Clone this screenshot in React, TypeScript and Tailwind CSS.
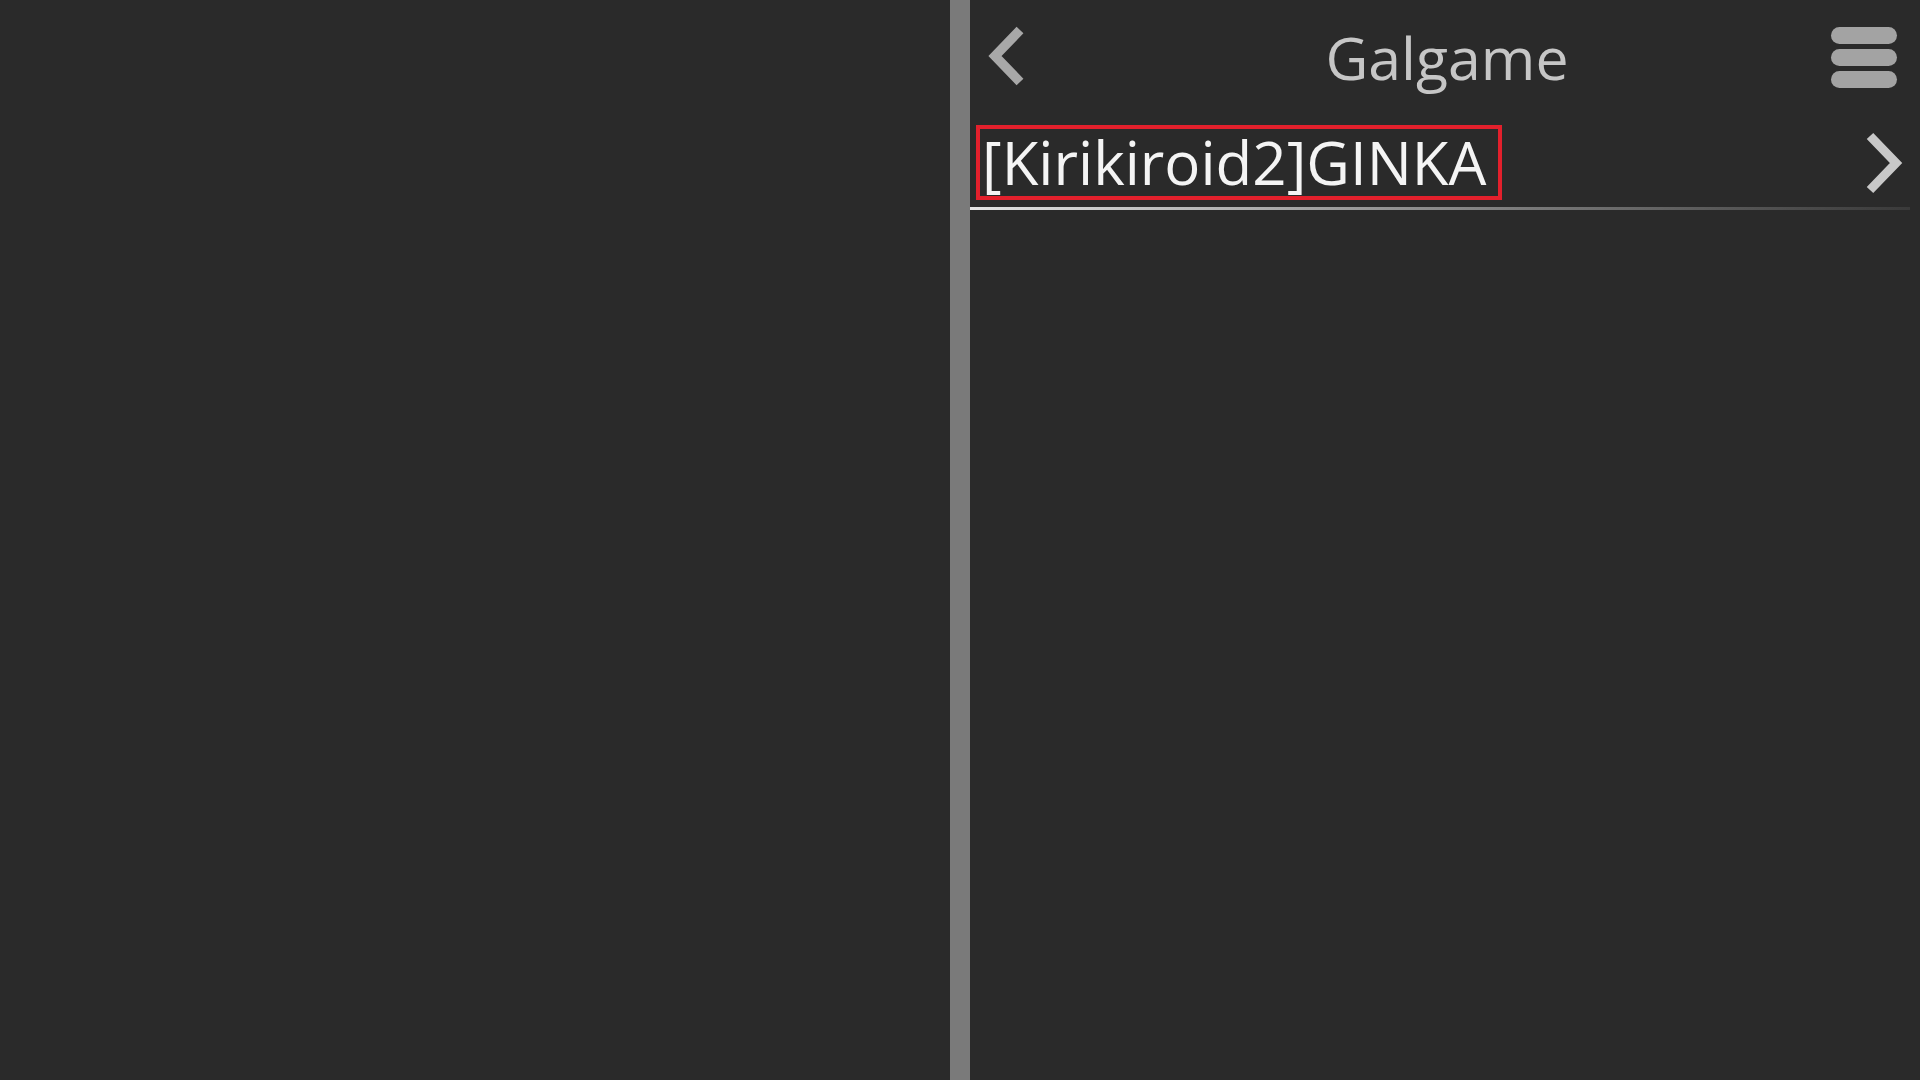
export default function App() {
  return (
    <div
      className="flex h-screen w-full bg-[#2a2a2a] overflow-hidden"
      style={{ fontFamily: '"Open Sans", "Noto Sans", sans-serif' }}
    >
      {/* left empty pane */}
      <div className="w-[950px] shrink-0" />
      <div className="w-[20px] shrink-0 bg-[#7a7a7a]" />

      <div className="flex flex-1 flex-col">
        <div className="grid h-[114px] grid-cols-[1fr_auto_1fr] items-center">
          <div className="flex items-center pl-[15px]">
            <svg width="40" height="64" viewBox="0 0 40 64" fill="none">
              <polyline
                points="35,5 10,31 35,57"
                stroke="#a8a8a8"
                strokeWidth="9.5"
                strokeLinejoin="miter"
                strokeLinecap="butt"
              />
            </svg>
          </div>
          <div className="pl-[4px] text-[59px] leading-none text-[#c6c6c6]">Galgame</div>
          <div className="flex justify-end pr-[23px]">
            <div className="flex w-[66px] flex-col gap-[5px]">
              <div className="h-[17px] rounded-full bg-[#a3a3a3]" />
              <div className="h-[17px] rounded-full bg-[#a3a3a3]" />
              <div className="h-[17px] rounded-full bg-[#a3a3a3]" />
            </div>
          </div>
        </div>

        <div className="mt-[11px] flex items-center justify-between pr-[15px]">
          <div className="ml-[6px] border-4 border-[#e3202c] pl-[2px] pr-[11px]">
            <span className="block text-[60px] leading-[67px] text-[#f4f4f4]">
              [Kirikiroid2]GINKA
            </span>
          </div>
          <svg width="40" height="64" viewBox="0 0 40 64" fill="none">
            <polyline
              points="5,5 31,32 5,59"
              stroke="#c8c8c8"
              strokeWidth="9"
              strokeLinejoin="miter"
              strokeLinecap="butt"
            />
          </svg>
        </div>
        <div className="mt-[7px] mr-[10px] h-[3px] bg-gradient-to-r from-[#e4e4e4] via-[#8a8a8a] to-[#3a3a3a]" />
      </div>
    </div>
  );
}
